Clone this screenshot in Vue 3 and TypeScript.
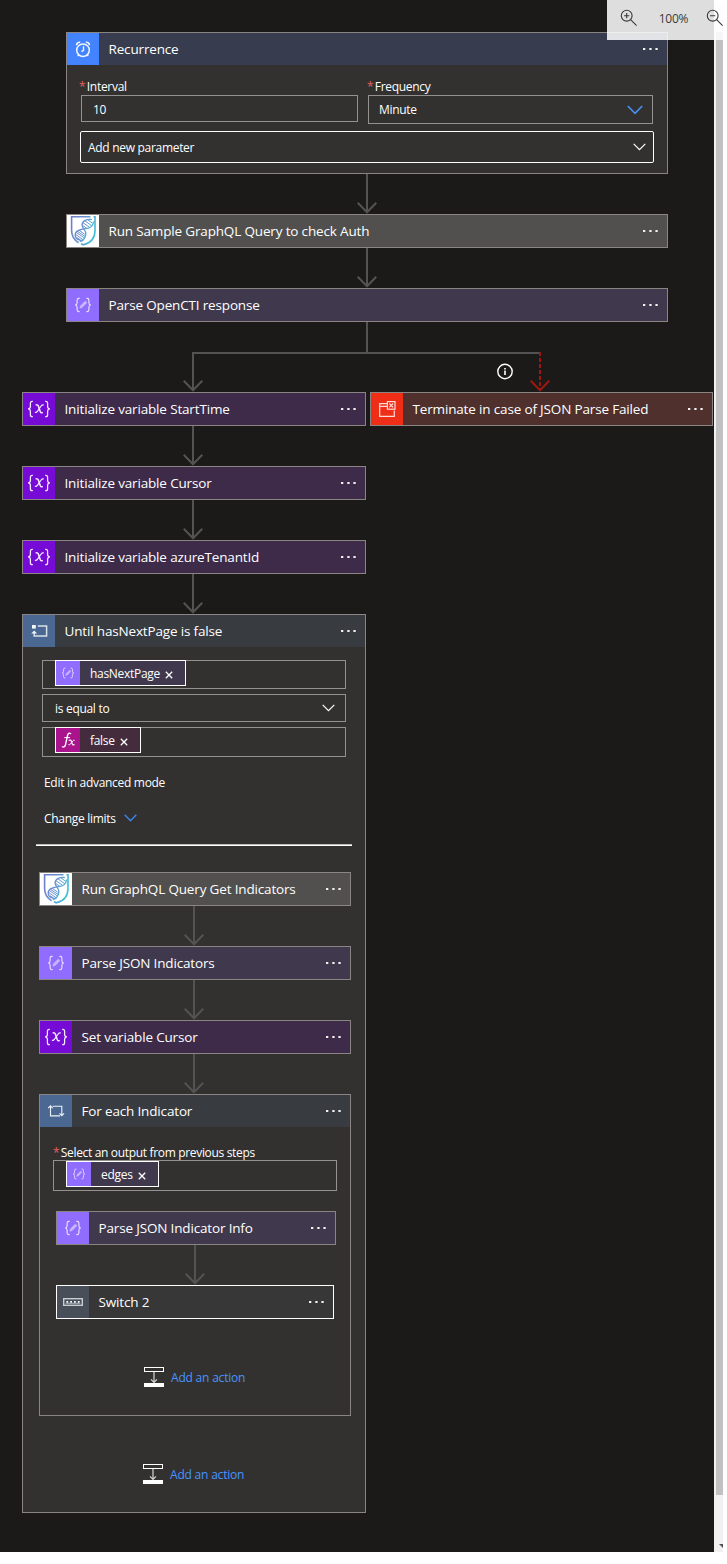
<script setup lang="ts">
interface Step {
  title: string
  kind: string
  icon: string
}

const topSteps: Step[] = [
  { title: 'Run Sample GraphQL Query to check Auth', kind: 'graphql', icon: 'shield' },
  { title: 'Parse OpenCTI response', kind: 'parse', icon: 'parse' },
]

const variableSteps: Step[] = [
  { title: 'Initialize variable StartTime', kind: 'variable', icon: 'variable' },
  { title: 'Initialize variable Cursor', kind: 'variable', icon: 'variable' },
  { title: 'Initialize variable azureTenantId', kind: 'variable', icon: 'variable' },
]

const loopSteps: Step[] = [
  { title: 'Run GraphQL Query Get Indicators', kind: 'graphql', icon: 'shield' },
  { title: 'Parse JSON Indicators', kind: 'parse', icon: 'parse' },
  { title: 'Set variable Cursor', kind: 'variable', icon: 'variable' },
]
</script>

<template>
  <div class="page">
    <svg class="defs" aria-hidden="true">
      <defs>
        <linearGradient id="shieldStroke" gradientUnits="userSpaceOnUse" x1="5" y1="8" x2="28" y2="16">
          <stop offset="0" stop-color="#6b80ca" />
          <stop offset=".45" stop-color="#6b8fd2" />
          <stop offset="1" stop-color="#3fc0d4" />
        </linearGradient>
      </defs>
      <symbol id="i-clock" viewBox="0 0 32 32">
        <g fill="none" stroke="#fff" stroke-opacity=".92">
          <circle cx="16" cy="17.2" r="6.3" stroke-width="1.5" />
          <path d="M16.5 13.2V17.4L14.4 18.6" stroke-width="1.4" />
          <path d="M9.6 12.3A3 3 0 0 1 13.2 9.3M22.4 12.3A3 3 0 0 0 18.8 9.3" stroke-width="1.7" />
          <path d="M11.9 21.7l-1.2 1.4M20.1 21.7l1.2 1.4" stroke-width="1.2" />
        </g>
      </symbol>
      <symbol id="i-shield" viewBox="0 0 32 32">
        <rect width="32" height="32" fill="#fff" />
        <g fill="none" stroke="url(#shieldStroke)">
          <path d="M23.5 1.7H4.6V15.5C4.6 21.5 7.5 25.2 11.6 27.7M26.5 1.7H28V15.5C28 23.5 23 28.3 16.3 29.8L14 28.8" stroke-width="1.6" />
          <path d="M24.8 4.5C19 4 15 6 15.1 10.1C15.3 14 19.7 14.8 18.8 19.6C18.2 23 15.5 25.8 12.8 26.5" stroke-width="1.3" />
          <path d="M26.6 6.5C26 11.7 22.7 13.3 18.7 13.6C12.8 14 7.7 16.2 8.2 20.4C8.6 24.5 12.5 25.5 16.3 25.7" stroke-width="1.3" />
          <path d="M18 5.8l6.5 4.8M16.1 7.8l6.3 4.4M15.6 10.4l4.2 2.9M21 5l4.6 3.2M12 15.2l5.8 4.1M10.6 16.4l7.4 5M9.6 17.7l8 5.4M9 19.7l6.8 4.8M10 22.7l3 2" stroke-width="1" />
        </g>
      </symbol>
      <symbol id="i-parse" viewBox="0 0 32 32">
        <g fill="none" stroke="#eee6ff" stroke-width="1.1">
          <path d="M12.6 9.4h-.8q-1.7 0-1.7 1.8v2.5q0 2-1.8 2.3q1.8.3 1.8 2.3v2.5q0 1.8 1.7 1.8h.8" />
          <path d="M19.4 9.4h.8q1.7 0 1.7 1.8v2.5q0 2 1.8 2.3q-1.8.3-1.8 2.3v2.5q0 1.8-1.7 1.8h-.8" />
        </g>
        <path d="M12.9 19.2l.7-2.5 4.2-4.1q.7-.5 1.4.2t.1 1.4l-4 4.1z" fill="#c7b4ff" stroke="#e3d9ff" stroke-width=".4" />
      </symbol>
      <symbol id="i-variable" viewBox="0 0 32 32">
        <g fill="none" stroke="#f5ecff" stroke-width="1.25">
          <path d="M9.8 8.3H9.2q-1.8 0-1.8 2v3.1q0 2.1-2.2 2.5q2.2.3 2.2 2.5v3.3q0 2 1.8 2h.6" />
          <path d="M22.2 8.3h.6q1.8 0 1.8 2v3.1q0 2.1 2.2 2.5q-2.2.3-2.2 2.5v3.3q0 2-1.8 2h-.6" />
          <path d="M12.6 12.2q1.9-1 2.7.7l2 5.8q.7 1.7 2.4.6" stroke-width="1.5" />
          <path d="M20.8 12q-1.5-.5-2.5.8l-3.9 5.6q-1 1.4-2.5.9" stroke-width="1.1" />
        </g>
      </symbol>
      <symbol id="i-terminate" viewBox="0 0 32 32">
        <g fill="none" stroke="#ffd9d4" stroke-width="1.2">
          <path d="M16 10.6H8.7V23.3H23.3V17.5" />
          <path d="M8.7 13.4H16" />
          <rect x="16.4" y="8.6" width="7.6" height="7.6" />
          <path d="M18.3 10.5l3.8 3.8M22.1 10.5l-3.8 3.8" />
        </g>
      </symbol>
      <symbol id="i-until" viewBox="0 0 32 32">
        <rect x="9" y="10" width="3.8" height="3.6" fill="#f4f7fb" />
        <path d="M14.8 11.1H23.6V20.9H11.2V17.2" fill="none" stroke="#d8e0ea" stroke-width="1.5" />
        <path d="M8.2 18.6L11.2 15.4L14.2 18.6Z" fill="#eef2f7" />
      </symbol>
      <symbol id="i-foreach" viewBox="0 0 32 32">
        <g fill="none" stroke="#edf2f8" stroke-width="1.1">
          <path d="M10.5 11V20.9H20M8.2 13.2L10.5 10.9L12.8 13.2" />
          <path d="M12.8 11.2H21.8V20.4M19.5 18.3L21.8 20.6L24.1 18.3" />
        </g>
      </symbol>
      <symbol id="i-switch" viewBox="0 0 32 32">
        <rect x="6.7" y="12.7" width="18.6" height="6.6" fill="none" stroke="#c9ccd1" stroke-width="1.4" />
        <path d="M9.4 15h1.8v1.8H9.4zM13.2 15h1.8v1.8h-1.8zM17 15h1.8v1.8H17zM20.8 15h1.8v1.8h-1.8z" fill="#fff" />
        <path d="M8.7 17.3h14.6" stroke="#b9bdc3" stroke-width=".9" />
      </symbol>
      <symbol id="i-fx" viewBox="0 0 32 32">
        <g fill="none" stroke="#fff" stroke-linecap="round">
          <path d="M19.5 7.4Q16.5 5.5 15.4 10L12.7 22Q11.6 26.5 8.6 25" stroke-width="1.8" />
          <path d="M11.6 12.8h6.6" stroke-width="1.3" />
          <path d="M17.6 16.4q2.2-.8 2.9 1.1l1.2 4q.7 1.8 2.4.7" stroke-width="1.6" />
          <path d="M24.4 16.3q-1.2-.3-2 .9l-3.2 4.3q-.9 1.3-2.2.8" stroke-width="1.3" />
        </g>
      </symbol>
      <symbol id="i-dots" viewBox="0 0 15 2">
        <path d="M0 0h2.3v2H0zM6.3 0h2.3v2H6.3zM12.4 0h2.3v2h-2.3z" fill="#f3f2f1" />
      </symbol>
      <symbol id="i-x" viewBox="0 0 8 8">
        <path d="M.8.8l6.4 6.4M7.2.8L.8 7.2" fill="none" stroke="#fff" stroke-width="1.3" />
      </symbol>
      <symbol id="i-arrow" viewBox="0 0 20 40">
        <path d="M10 0V38.5M.7 28.7L10 38.3L19.3 28.7" fill="none" stroke="#535353" stroke-width="2" />
      </symbol>
      <symbol id="i-add" viewBox="0 0 20 20">
        <rect x=".5" y=".5" width="19" height="4" fill="none" stroke="#fff" />
        <path d="M10 5V15.5M7 12.3L10 15.3L13 12.3" fill="none" stroke="#d6d6d6" stroke-width="1.2" />
        <rect y="16" width="20" height="4" fill="#fff" />
      </symbol>
    </svg>

    <main class="canvas">
      <section class="card trigger">
        <header class="head recurrence">
          <svg class="icon"><use href="#i-clock" /></svg>
          <span class="title">Recurrence</span>
          <svg class="dots"><use href="#i-dots" /></svg>
        </header>
        <div class="trigger-body">
          <div class="fields">
            <div class="field interval">
              <label class="label"><i>*</i>Interval</label>
              <div class="box">10</div>
            </div>
            <div class="field frequency">
              <label class="label"><i>*</i>Frequency</label>
              <div class="box">
                Minute
                <svg class="chev-lg" viewBox="0 0 16 10"><path d="M.8 1L8 8.3L15.2 1" fill="none" stroke="#4792f5" stroke-width="1.6" /></svg>
              </div>
            </div>
          </div>
          <div class="add-param">
            Add new parameter
            <svg class="chev" viewBox="0 0 13 8"><path d="M.7.8L6.5 6.7L12.3.8" fill="none" stroke="#fff" stroke-width="1.2" /></svg>
          </div>
        </div>
      </section>

      <template v-for="step in topSteps" :key="step.title">
        <svg class="arrow center"><use href="#i-arrow" /></svg>
        <section class="card wide">
          <header class="head" :class="step.kind">
            <svg class="icon"><use :href="'#i-' + step.icon" /></svg>
            <span class="title">{{ step.title }}</span>
            <svg class="dots"><use href="#i-dots" /></svg>
          </header>
        </section>
      </template>

      <svg class="fork" viewBox="0 0 714 70">
        <g fill="none" stroke-width="2">
          <path d="M367 0V31M540 31H193V68.5M183.7 58.7L193 68.3L202.3 58.7" stroke="#535353" />
          <path d="M540 30V68" stroke="#9e1710" stroke-dasharray="4 2" />
          <path d="M530.7 58.7L540 68.3L549.3 58.7" stroke="#9e1710" />
        </g>
        <circle cx="505" cy="49.5" r="7.2" fill="none" stroke="#fff" stroke-width="1.4" />
        <path d="M504.2 46h1.6v1.4h-1.6zM504.2 48.5h1.6v4.4h-1.6z" fill="#fff" />
      </svg>

      <div class="branches">
        <div class="branch main">
          <template v-for="step in variableSteps" :key="step.title">
            <section class="card">
              <header class="head" :class="step.kind">
                <svg class="icon"><use :href="'#i-' + step.icon" /></svg>
                <span class="title">{{ step.title }}</span>
                <svg class="dots"><use href="#i-dots" /></svg>
              </header>
            </section>
            <svg class="arrow"><use href="#i-arrow" /></svg>
          </template>

          <section class="card until">
            <header class="head loop">
              <svg class="icon"><use href="#i-until" /></svg>
              <span class="title">Until hasNextPage is false</span>
              <svg class="dots"><use href="#i-dots" /></svg>
            </header>
            <div class="condition">
              <div class="operand first">
                <span class="token parse">
                  <svg class="token-icon parse-bg" viewBox="0 0 25 25"><use href="#i-parse" width="25" height="25" /></svg>
                  <span class="token-text">hasNextPage</span>
                  <svg class="x"><use href="#i-x" /></svg>
                </span>
              </div>
              <div class="operand operator">
                is equal to
                <svg class="chev" viewBox="0 0 13 8"><path d="M.7.8L6.5 6.7L12.3.8" fill="none" stroke="#fff" stroke-width="1.2" /></svg>
              </div>
              <div class="operand last">
                <span class="token expression">
                  <svg class="token-icon fx-bg" viewBox="0 0 25 25"><use href="#i-fx" width="25" height="25" /></svg>
                  <span class="token-text">false</span>
                  <svg class="x"><use href="#i-x" /></svg>
                </span>
              </div>
            </div>
            <div class="link-row advanced">Edit in advanced mode</div>
            <div class="link-row limits">
              Change limits
              <svg class="chev" viewBox="0 0 13 8"><path d="M.7.8L6.5 6.7L12.3.8" fill="none" stroke="#3c86e8" stroke-width="1.4" /></svg>
            </div>
            <div class="divider"></div>

            <div class="nested">
              <template v-for="step in loopSteps" :key="step.title">
                <section class="card">
                  <header class="head" :class="step.kind">
                    <svg class="icon"><use :href="'#i-' + step.icon" /></svg>
                    <span class="title">{{ step.title }}</span>
                    <svg class="dots"><use href="#i-dots" /></svg>
                  </header>
                </section>
                <svg class="arrow"><use href="#i-arrow" /></svg>
              </template>

              <section class="card foreach">
                <header class="head loop">
                  <svg class="icon"><use href="#i-foreach" /></svg>
                  <span class="title">For each Indicator</span>
                  <svg class="dots"><use href="#i-dots" /></svg>
                </header>
                <label class="label select-label"><i>*</i>Select an output from previous steps</label>
                <div class="operand source">
                  <span class="token parse">
                    <svg class="token-icon parse-bg" viewBox="0 0 25 25"><use href="#i-parse" width="25" height="25" /></svg>
                    <span class="token-text">edges</span>
                    <svg class="x"><use href="#i-x" /></svg>
                  </span>
                </div>
                <div class="inner">
                  <section class="card">
                    <header class="head parse">
                      <svg class="icon"><use href="#i-parse" /></svg>
                      <span class="title">Parse JSON Indicator Info</span>
                      <svg class="dots"><use href="#i-dots" /></svg>
                    </header>
                  </section>
                  <svg class="arrow"><use href="#i-arrow" /></svg>
                  <section class="card switch-card">
                    <header class="head switch">
                      <svg class="icon"><use href="#i-switch" /></svg>
                      <span class="title">Switch 2</span>
                      <svg class="dots"><use href="#i-dots" /></svg>
                    </header>
                  </section>
                </div>
                <div class="add-action">
                  <svg class="add-icon"><use href="#i-add" /></svg>
                  <span>Add an action</span>
                </div>
              </section>
            </div>
            <div class="add-action outer">
              <svg class="add-icon"><use href="#i-add" /></svg>
              <span>Add an action</span>
            </div>
          </section>
        </div>

        <section class="card branch-fail">
          <header class="head terminate">
            <svg class="icon"><use href="#i-terminate" /></svg>
            <span class="title">Terminate in case of JSON Parse Failed</span>
            <svg class="dots"><use href="#i-dots" /></svg>
          </header>
        </section>
      </div>
    </main>

    <aside class="scroll">
      <div class="thumb"></div>
      <svg class="scroll-arrow" viewBox="0 0 4 4"><path d="M0 0H4V4Z" fill="#505050" /></svg>
    </aside>

    <div class="zoombar">
      <svg class="mag" viewBox="0 0 17 17">
        <g fill="none" stroke="#3b3a39" stroke-width="1.1"><circle cx="6.7" cy="6.7" r="5.4" /><path d="M10.6 10.6L16.6 16.6M4.1 6.7H9.3M6.7 4.1V9.3" /></g>
      </svg>
      <span class="pct">100%</span>
      <svg class="mag" viewBox="0 0 17 17">
        <g fill="none" stroke="#3b3a39" stroke-width="1.1"><circle cx="6.7" cy="6.7" r="5.4" /><path d="M10.6 10.6L16.6 16.6M4.1 6.7H9.3" /></g>
      </svg>
    </div>
  </div>
</template>

<style>
body {
  background: #fff;
}
</style>

<style scoped>
.page {
  position: relative;
  display: flex;
  align-items: flex-start;
  width: 727px;
  height: 1564px;
  overflow: hidden;
  color: #fff;
  font-family: 'Open Sans', 'Noto Sans', sans-serif;
  font-size: 12px;
  letter-spacing: -0.3px;
}
.page * {
  box-sizing: border-box;
}
.page svg {
  display: block;
  flex: none;
}
.page .defs {
  position: absolute;
  width: 0;
  height: 0;
}
.canvas {
  width: 714px;
  height: 1552px;
  padding-top: 32px;
  background: #1b1a19;
}
.card {
  border: 1px solid #8a8583;
  background: #323130;
}
.head {
  display: flex;
  align-items: center;
  height: 32px;
  padding-right: 9px;
}
.icon {
  width: 32px;
  height: 32px;
}
.title {
  flex: 1;
  padding-left: 9.5px;
  font-size: 13.5px;
  line-height: 32px;
  letter-spacing: -0.16px;
  white-space: nowrap;
}
.dots {
  width: 15px;
  height: 2px;
}
.recurrence { background: #373c4e; }
.recurrence .icon { background: #4383ff; }
.graphql { background: #51504e; }
.parse { background: #40394e; }
.parse .icon, .parse-bg { background: #916dff; }
.variable { background: #3d2b49; }
.variable .icon { background: #770bd6; }
.loop { background: #383b40; }
.loop .icon { background: #4b6892; }
.terminate { background: #4f302d; }
.terminate .icon { background: #ef2e18; }
.switch { background: #373737; }
.switch .icon { background: #484f59; }
.fx-bg { background: #a9148d; }
.expression { background: #442c3d; }

.trigger,
.wide {
  width: 602px;
  margin-left: 66px;
}
.trigger {
  height: 142px;
}
.trigger-body {
  padding: 13px 13px 0;
}
.fields {
  display: flex;
  gap: 10px;
}
.label {
  display: block;
  height: 17px;
  line-height: 17px;
  white-space: nowrap;
}
.label i {
  margin: 0 1.5px 0 -1px;
  color: #e8605e;
  font-style: normal;
}
.box {
  display: flex;
  align-items: center;
  justify-content: space-between;
  border: 1px solid #949290;
}
.interval {
  width: 278px;
}
.interval .box {
  width: 277px;
  height: 27px;
  margin-left: 1px;
  padding: 1px 0 0 11px;
}
.frequency {
  width: 285px;
}
.frequency .box {
  height: 29px;
  padding: 0 9px 0 10px;
}
.chev-lg {
  width: 16px;
  height: 10px;
}
.chev {
  width: 13px;
  height: 8px;
}
.add-param {
  display: flex;
  align-items: center;
  justify-content: space-between;
  width: 574px;
  height: 32px;
  margin-top: 7px;
  padding: 0 7px;
  border: 1px solid #fff;
  border-radius: 2px;
}
.arrow {
  width: 20px;
  height: 40px;
}
.arrow.center {
  margin-left: 357px;
}
.fork {
  width: 714px;
  height: 70px;
}
.branches {
  display: flex;
  align-items: flex-start;
  gap: 4px;
  padding-left: 22px;
}
.main {
  width: 344px;
}
.main > .arrow {
  margin-left: 161px;
}
.branch-fail {
  width: 343px;
}
.until {
  height: 899px;
}
.condition {
  display: flex;
  flex-direction: column;
  gap: 5px;
  width: 304px;
  margin: 13px 0 0 19px;
}
.operand {
  display: flex;
  align-items: flex-start;
  border: 1px solid #949290;
  padding-left: 12px;
}
.first {
  height: 29px;
}
.operator {
  height: 28px;
  align-items: center;
  justify-content: space-between;
  padding-right: 10px;
}
.last {
  height: 30px;
}
.token {
  display: flex;
  align-items: center;
  height: 26px;
  margin-top: -1px;
  padding-right: 12px;
  border: 1px solid #fff;
}
.token-icon {
  width: 24px;
  height: 24px;
}
.token-text {
  padding: 2px 5px 0 10px;
  line-height: 22px;
  white-space: nowrap;
}
.x {
  width: 8px;
  height: 8px;
  margin-top: 4px;
}
.link-row {
  display: flex;
  align-items: center;
  height: 20px;
  margin-left: 21px;
}
.advanced {
  margin-top: 15px;
}
.limits {
  gap: 8px;
  margin-top: 16px;
}
.divider {
  width: 316px;
  height: 2px;
  margin: 16px 0 0 13px;
  background: linear-gradient(#bdbcbb 50%, #fff 50%);
}
.nested {
  width: 312px;
  margin: 26px 0 0 16px;
}
.nested > .arrow {
  margin-left: 145px;
}
.foreach {
  height: 322px;
}
.select-label {
  margin: 17px 0 0 14px;
  letter-spacing: -0.33px;
}
.source {
  width: 284px;
  height: 31px;
  margin: -1px 0 0 13px;
}
.source .token {
  margin-top: 0;
}
.inner {
  width: 280px;
  margin: 20px 0 0 16px;
}
.inner .arrow {
  margin-left: 129px;
}
.switch-card {
  width: 278px;
  border-color: #fff;
}
.add-action {
  display: flex;
  align-items: center;
  gap: 7px;
  height: 20px;
  margin: 48px 0 0 104px;
  color: #4894fe;
  letter-spacing: -0.2px;
}
.add-action.outer {
  margin: 48px 0 0 120px;
}
.add-icon {
  width: 20px;
  height: 20px;
}
.scroll {
  width: 9px;
  height: 1548px;
  margin-top: 4px;
  background: #f1f1f1;
}
.thumb {
  width: 7px;
  height: 1463px;
  margin: 28px 0 0 2px;
  background: #c1c1c1;
}
.scroll-arrow {
  width: 4px;
  height: 4px;
  margin: 49px 0 0 5px;
}
.zoombar {
  position: absolute;
  top: 0;
  left: 607px;
  display: flex;
  align-items: flex-start;
  width: 116px;
  height: 40px;
  padding: 9px 0 0 13px;
  overflow: hidden;
  background: rgba(255, 255, 255, 0.86);
  color: #3b3a39;
}
.mag {
  width: 17px;
  height: 17px;
}
.pct {
  width: 49px;
  margin: 1px 9px 0 13px;
  text-align: center;
  line-height: 17px;
  letter-spacing: -0.2px;
}
</style>
